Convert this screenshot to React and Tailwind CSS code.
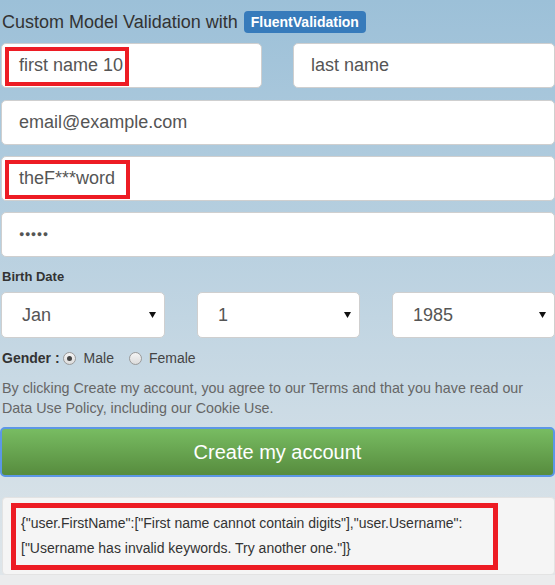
import React from "react";

const font = { fontFamily: '"Liberation Sans", Arial, sans-serif' };

const Field = ({ value, mark, markWidth, dots }) => (
  <div className="relative h-[45px] w-full rounded-[5px] border border-[#cfcfcf] bg-white flex items-center pl-[17px] text-[18px] text-[#555]">
    {dots ? (
      <span className="tracking-[0.5px] text-[#555] text-[9px]">●●●●●</span>
    ) : (
      <span>{value}</span>
    )}
    {mark && (
      <span
        className="absolute left-[3px] top-[3px] bottom-[1px] border-[4px] border-[#ed1c24]"
        style={{ width: markWidth }}
      />
    )}
  </div>
);

const Select = ({ value, className }) => (
  <div
    className={`h-[46px] rounded-[5px] border border-[#cfcfcf] bg-white flex items-center justify-between pl-[20px] pr-[8px] text-[18px] text-[#555] ${className}`}
  >
    <span>{value}</span>
    <svg width="7" height="6" viewBox="0 0 7 6">
      <path d="M0 0h7L3.5 6z" fill="#111" />
    </svg>
  </div>
);

const Radio = ({ checked }) => (
  <span className="inline-flex w-[13px] h-[13px] rounded-full border border-[#9a9a9a] bg-linear-to-b from-[#f4f4f4] to-[#dcdcdc] items-center justify-center">
    {checked && <span className="w-[5px] h-[5px] rounded-full bg-[#444]" />}
  </span>
);

export default function App() {
  return (
    <div className="w-[555px] h-[585px] bg-[#ebeced] overflow-hidden" style={font}>
      <div className="bg-linear-to-b from-[#9cc0d8] to-[#dfe6ea] h-[575px] flex flex-col">
        <div className="flex items-center h-[36px] pt-[8px] pl-[2px] text-[18px] text-[#333]">
          <span>Custom Model Validation with</span>
          <span className="ml-[6px] rounded-[4px] bg-[#377bbb] px-[7px] h-[22px] flex items-center text-white text-[14px] font-bold">
            FluentValidation
          </span>
        </div>

        <div className="flex gap-[31px] pl-[1px] mt-[7px]">
          <div className="w-[261px]">
            <Field value="first name 10" mark markWidth="124px" />
          </div>
          <div className="flex-1">
            <Field value="last name" />
          </div>
        </div>

        <div className="pl-[1px] mt-[12px]">
          <Field value="email@example.com" />
        </div>
        <div className="pl-[1px] mt-[11px]">
          <Field value="theF***word" mark markWidth="125px" />
        </div>
        <div className="pl-[1px] mt-[11px]">
          <Field dots />
        </div>

        <div className="mt-[12px] pl-[2px] text-[13px] font-bold text-[#333] h-[16px] leading-[16px]">
          Birth Date
        </div>

        <div className="flex gap-[32px] pl-[1px] mt-[7px]">
          <Select value="Jan" className="w-[164px]" />
          <Select value="1" className="w-[163px]" />
          <Select value="1985" className="flex-1" />
        </div>

        <div className="flex items-center mt-[11px] pl-[2px] h-[18px] text-[14px] text-[#444]">
          <span className="font-bold text-[14px] text-[#333] mr-[3px]">Gender :</span>
          <Radio checked />
          <span className="ml-[8px]">Male</span>
          <span className="ml-[15px] flex">
            <Radio />
          </span>
          <span className="ml-[7px]">Female</span>
        </div>

        <div className="mt-[11px] pl-[2px] text-[14.3px] leading-[20px] text-[#666]">
          By clicking Create my account, you agree to our Terms and that you have read our
          <br />
          Data Use Policy, including our Cookie Use.
        </div>

        <button className="mt-[9px] mx-0 h-[50px] w-full rounded-[5px] border-2 border-[#5c97e6] bg-linear-to-b from-[#78bc62] to-[#578c3e] text-white text-[20px] flex items-center justify-center">
          Create my account
        </button>

        <div className="mt-[20px] ml-[2px] h-[78px] rounded-[4px] border border-[#e3e3e3] bg-[#f5f5f5] pt-[5px] pl-[8px]">
          <div className="w-[487px] h-[67px] border-[5px] border-[#ed1c24] pl-[5px] pt-[3px] text-[14px] leading-[25px] text-[#333]">
            {'{"user.FirstName":["First name cannot contain digits"],"user.Username":'}
            <br />
            {'["Username has invalid keywords. Try another one."]}'}
          </div>
        </div>
      </div>
    </div>
  );
}
